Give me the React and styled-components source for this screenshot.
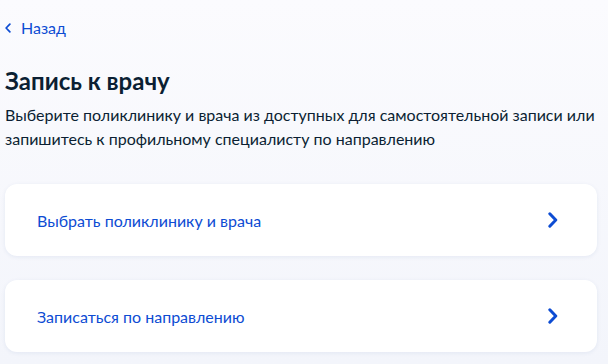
import React from "react";
import styled, { createGlobalStyle } from "styled-components";

const GlobalStyle = createGlobalStyle`
  body {
    margin: 0;
    background: #f7f8fc;
    font-family: Lato, "Noto Sans", sans-serif;
    color: #0b1f33;
  }
`;

const Page = styled.div`
  padding: 16px 11px 0 5px;
  min-height: 364px;
  box-sizing: border-box;
  background: linear-gradient(#fbfbfe, #f3f5fb);
`;

const Back = styled.a`
  display: inline-flex;
  align-items: center;
  gap: 10px;
  color: #0d4cd3;
  font-size: 16px;
  line-height: 24px;
  text-decoration: none;
  cursor: pointer;
`;

const Title = styled.h1`
  margin: 25px 0 0;
  font-size: 24px;
  line-height: 32px;
  font-weight: 700;
`;

const Desc = styled.p`
  margin: 6px 0 0;
  font-size: 16px;
  line-height: 24px;
`;

const List = styled.div`
  display: flex;
  flex-direction: column;
  gap: 24px;
  margin-top: 33px;
`;

const Card = styled.div`
  display: flex;
  align-items: center;
  justify-content: space-between;
  height: 72px;
  padding: 0 39px 0 32px;
  background: #fff;
  border-radius: 12px;
  box-shadow: 0 1px 4px rgba(30, 60, 140, 0.08);
  color: #0d4cd3;
  font-size: 16px;
  cursor: pointer;
`;

const Chevron = ({ size = 16, left, weight = 2.8 }) => (
  <svg width={size * 0.6} height={size} viewBox="0 0 9 15" fill="none">
    <path
      d={left ? "M7.3 1.7L1.7 7.5L7.3 13.3" : "M1.7 1.7L7.3 7.5L1.7 13.3"}
      stroke="#0d4cd3"
      strokeWidth={weight}
      strokeLinecap="round"
      strokeLinejoin="round"
    />
  </svg>
);

const items = ["Выбрать поликлинику и врача", "Записаться по направлению"];

export default function App() {
  return (
    <>
      <GlobalStyle />
      <Page>
        <Back>
          <Chevron size={10} left weight={2.6} />
          Назад
        </Back>
        <Title>Запись к врачу</Title>
        <Desc>
          Выберите поликлинику и врача из доступных для самостоятельной записи или
          запишитесь к профильному специалисту по направлению
        </Desc>
        <List>
          {items.map((t) => (
            <Card key={t}>
              {t}
              <Chevron size={16} />
            </Card>
          ))}
        </List>
      </Page>
    </>
  );
}
